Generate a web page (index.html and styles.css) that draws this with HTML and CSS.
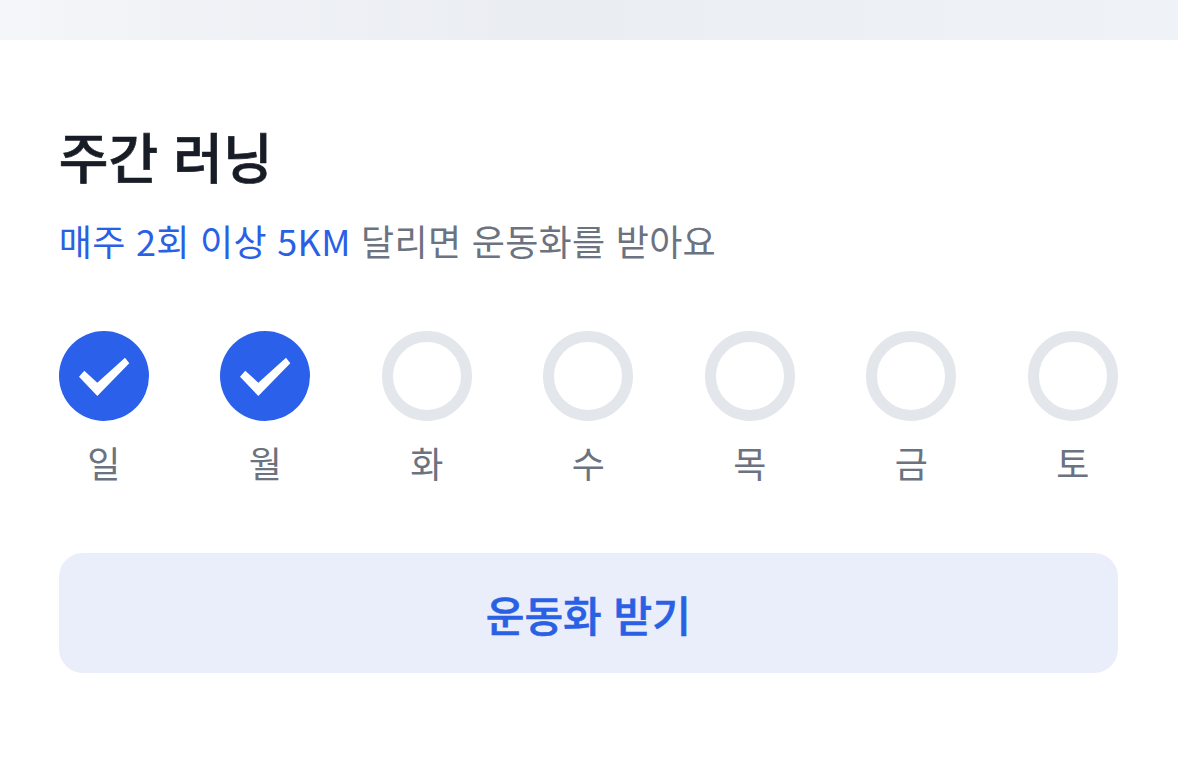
FILE: index.html
```html
<!DOCTYPE html>
<html lang="ko">
<head>
    <meta charset="UTF-8">
    <meta name="viewport" content="width=device-width, initial-scale=1.0">
    <title>주간 러닝</title>
    <link rel="stylesheet" href="styles.css">
</head>
<body>
    <div class="top-band"></div>

    <section class="card">
        <h1 class="title">주간 러닝</h1>
        <p class="subtitle"><span class="accent">매주 2회 이상 5KM</span> 달리면 운동화를 받아요</p>

        <ul class="days">
            <li class="day">
                <span class="mark done">
                    <svg width="90" height="90" viewBox="0 0 90 90"><path d="M20 45.7 L25.3 39.7 L38.3 51.7 L66 26.7 L70.3 32.3 L38.3 65 Z" fill="#fff"/></svg>
                </span>
                <span class="day-name">일</span>
            </li>
            <li class="day">
                <span class="mark done">
                    <svg width="90" height="90" viewBox="0 0 90 90"><path d="M20 45.7 L25.3 39.7 L38.3 51.7 L66 26.7 L70.3 32.3 L38.3 65 Z" fill="#fff"/></svg>
                </span>
                <span class="day-name">월</span>
            </li>
            <li class="day"><span class="mark"></span><span class="day-name">화</span></li>
            <li class="day"><span class="mark"></span><span class="day-name">수</span></li>
            <li class="day"><span class="mark"></span><span class="day-name">목</span></li>
            <li class="day"><span class="mark"></span><span class="day-name">금</span></li>
            <li class="day"><span class="mark"></span><span class="day-name">토</span></li>
        </ul>

        <button class="claim" type="button">운동화 받기</button>
    </section>
</body>
</html>
```

FILE: styles.css
```css
* {
    margin: 0;
    padding: 0;
    box-sizing: border-box;
}

html, body {
    height: 100%;
}

body {
    font-family: "Noto Sans CJK KR", "Noto Sans", sans-serif;
    background: #fff;
    overflow: hidden;
}

.top-band {
    height: 40px;
    background: linear-gradient(90deg, #f4f6f9, #f1f3f7 12%, #eaedf2 45%, #eff2f6);
}

.card {
    padding: 84px 60.2px 0 58.8px;
}

.title {
    font-size: 54px;
    font-weight: 500;
    -webkit-text-stroke: 0.7px #171c26;
    line-height: 64px;
    color: #171c26;
}

.subtitle {
    margin-top: 29px;
    font-size: 36px;
    font-weight: 400;
    line-height: 46px;
    letter-spacing: 0.3px;
    color: #6b7280;
}

.accent {
    color: #2a60e4;
}

.days {
    display: flex;
    justify-content: space-between;
    margin-top: 68px;
    list-style: none;
}

.day {
    display: flex;
    flex-direction: column;
    align-items: center;
    gap: 18px;
    width: 90px;
}

.mark {
    display: block;
    width: 90px;
    height: 90px;
    border: 11px solid #e3e6eb;
    border-radius: 50%;
}

.mark.done {
    border: 0;
    background: #2a60ea;
}

.mark svg {
    display: block;
}

.day-name {
    font-size: 36px;
    line-height: 46px;
    color: #6b7280;
}

.claim {
    display: block;
    width: 100%;
    height: 120px;
    margin-top: 68px;
    border: 0;
    border-radius: 24px;
    background: #e9eefa;
    color: #2a60e4;
    font-family: inherit;
    font-size: 42px;
    font-weight: 500;
    -webkit-text-stroke: 0.6px #2a60e4;
}
```
